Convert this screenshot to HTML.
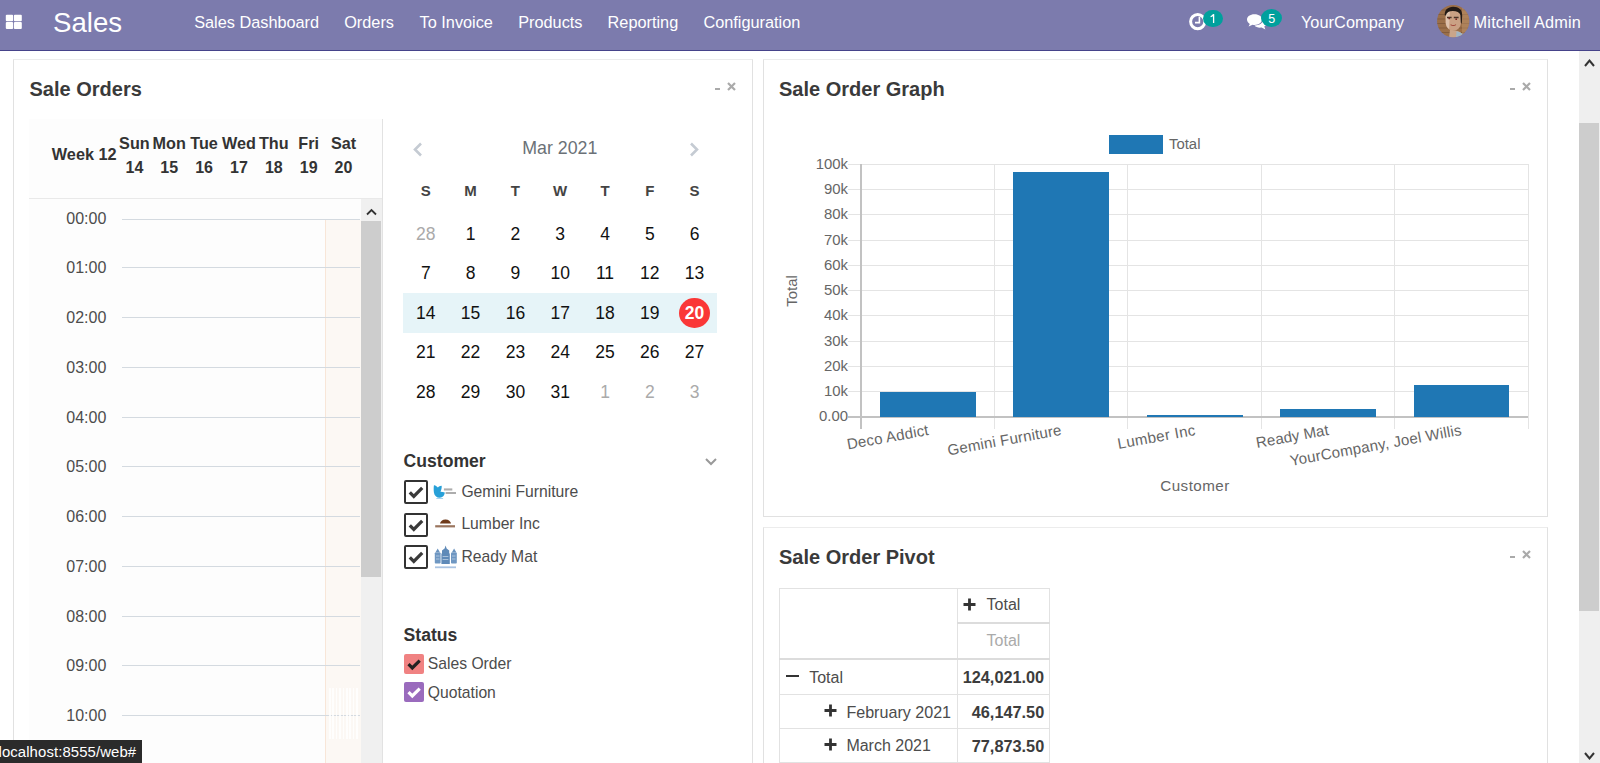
<!DOCTYPE html><html><head><meta charset="utf-8"><style>
*{box-sizing:border-box;margin:0;padding:0}
html,body{width:1600px;height:763px;overflow:hidden;background:#fff;font-family:"Liberation Sans",sans-serif;color:#333}
.a{position:absolute;white-space:nowrap;line-height:1}
.r{position:absolute}
svg.r{overflow:visible}
</style></head><body>
<div class="r" style="left:0;top:0;width:1600px;height:50px;background:#7C7BAD"></div>
<div class="r" style="left:0;top:50px;width:1600px;height:1px;background:#46438a"></div>
<svg class="r" style="left:5px;top:14px" width="18" height="16" viewBox="0 0 18 16">
<rect x="0.8" y="0.8" width="7.3" height="6.5" rx="1" fill="#fff"/>
<rect x="8.9" y="0.8" width="7.9" height="6.5" rx="1" fill="#fff"/>
<rect x="0.8" y="8.1" width="7.3" height="6.8" rx="1" fill="#fff"/>
<rect x="8.9" y="8.1" width="7.9" height="6.8" rx="1" fill="#fff"/></svg>
<div class="a" style="top:8.64px;font-size:27.6px;color:#fff;left:53.00px;">Sales</div>
<div class="a" style="top:14.40px;font-size:16.3px;color:#fff;left:194.20px;letter-spacing:0px;">Sales Dashboard</div>
<div class="a" style="top:14.40px;font-size:16.3px;color:#fff;left:344.20px;letter-spacing:0px;">Orders</div>
<div class="a" style="top:14.40px;font-size:16.3px;color:#fff;left:419.60px;letter-spacing:0px;">To Invoice</div>
<div class="a" style="top:14.40px;font-size:16.3px;color:#fff;left:518.20px;letter-spacing:0px;">Products</div>
<div class="a" style="top:14.40px;font-size:16.3px;color:#fff;left:607.60px;letter-spacing:0px;">Reporting</div>
<div class="a" style="top:14.40px;font-size:16.3px;color:#fff;left:703.40px;letter-spacing:0px;">Configuration</div>
<div class="a" style="top:14.40px;font-size:16.3px;color:#fff;left:1300.90px;letter-spacing:0.07px;">YourCompany</div>
<div class="a" style="top:14.40px;font-size:16.3px;color:#fff;left:1473.60px;letter-spacing:0.18px;">Mitchell Admin</div>
<svg class="r" style="left:1188px;top:12px" width="20" height="20" viewBox="0 0 20 20">
<circle cx="9.7" cy="9.6" r="7.1" fill="none" stroke="#fff" stroke-width="3"/>
<path d="M11.4 4.8 V10.6 H7" fill="none" stroke="#fff" stroke-width="1.6"/></svg>
<div class="r" style="left:1202.9px;top:9.7px;width:19.7px;height:17.7px;border-radius:50%;background:#00A09D"></div>
<svg class="r" style="left:1209px;top:13px" width="8" height="11" viewBox="0 0 8 11">
<path d="M4.6 1.2 V10" stroke="#fff" stroke-width="1.3"/><path d="M4.6 1.4 C3.8 2.6 2.8 3.4 1.6 3.8" fill="none" stroke="#fff" stroke-width="1.2"/></svg>
<svg class="r" style="left:1246px;top:13px" width="22" height="18" viewBox="0 0 22 18">
<path d="M8.5 1.2 C4 1.2 1 3.6 1 6.6 C1 8.4 2.1 9.9 3.8 10.9 L2.6 13.6 L6.6 11.8 C7.2 11.9 7.8 12 8.5 12 C13 12 16 9.6 16 6.6 C16 3.6 13 1.2 8.5 1.2 Z" fill="#fff"/>
<path d="M17.2 5.5 C19.3 6.4 20.6 8 20.6 9.8 C20.6 11.3 19.7 12.6 18.3 13.5 L19.4 16.6 L15.6 14.6 C15.1 14.7 14.6 14.7 14 14.7 C11.6 14.7 9.6 13.9 8.5 12.6 C13.7 12.6 17.2 9.8 17.2 6.6 Z" fill="#fff"/></svg>
<div class="r" style="left:1261.3px;top:8.9px;width:20.9px;height:18.1px;border-radius:50%;background:#00A09D"></div>
<div class="a" style="top:12.62px;font-size:12.5px;color:#fff;left:1261.80px;width:20px;text-align:center;">5</div>
<svg class="r" style="left:1436.9px;top:4.8px" width="32.4" height="32.4" viewBox="0 0 32.4 32.4">
<defs><clipPath id="av"><circle cx="16.2" cy="16.2" r="16.1"/></clipPath></defs>
<g clip-path="url(#av)">
<rect width="33" height="33" fill="#9c7049"/>
<path d="M0 5 H33 M0 9.5 H33 M0 14 H33 M0 18.5 H33 M0 23 H33 M0 27.5 H33" stroke="#6e4c32" stroke-width="1" opacity="0.55"/>
<rect x="25" y="3" width="8" height="26" fill="#c59a6e" opacity="0.45"/>
<path d="M13 25 C16 25 20 25.5 23 27 C25 28.5 26 31 26 33 H12 Z" fill="#c9a58a"/>
<path d="M19.5 26.2 C22 26.6 25 27.8 26.5 30 L27 33 H19 Z" fill="#9fb6c6"/>
<path d="M8.2 9 C8 5.5 11.5 4.2 16 4.6 C20.5 5 24 6.5 24.2 11 L24 18 C23.6 22.5 20.8 25.5 16.6 25.6 C12.2 25.6 9 22.5 8.6 18 Z" fill="#caa184"/>
<path d="M9 9 C9 6 11.5 5.5 13 6 L12 24 C10 22.5 9 20.5 8.8 18 Z" fill="#e2cbb8" opacity="0.8"/>
<path d="M7.8 10.5 C7.2 5 11 2 16 1.8 C21.5 1.7 25.5 4.5 25.2 10.5 L24.8 17.5 C24.5 18.5 24 18.5 23.8 17.5 L23.4 10 C22.6 7.4 19.6 6 16 6 C12 6 9.6 7.2 8.8 10.5 Z" fill="#221a16"/>
<path d="M10 12.5 H14.6 M16.8 12.5 H21.6" stroke="#4a3428" stroke-width="1.5"/>
<circle cx="12.2" cy="13.4" r="0.9" fill="#7a2a22"/><circle cx="19.2" cy="14.2" r="0.9" fill="#7a2a22"/>
<path d="M13.6 19.6 C15 20.6 17.6 20.6 19 19.6" fill="none" stroke="#a0463a" stroke-width="1.1"/>
</g></svg>
<div class="r" style="left:13px;top:59px;width:740px;height:760px;border:1px solid #e1e1e1;border-top-color:#ececec;background:#fff"></div>
<div class="r" style="left:763px;top:59px;width:785px;height:458px;border:1px solid #e1e1e1;border-top-color:#ececec;background:#fff"></div>
<div class="r" style="left:763px;top:527px;width:785px;height:300px;border:1px solid #e1e1e1;border-top-color:#ececec;background:#fff"></div>
<div class="a" style="top:78.87px;font-size:20px;color:#3a3a3a;font-weight:bold;left:29.50px;">Sale Orders</div>
<div class="a" style="top:78.57px;font-size:20px;color:#3a3a3a;font-weight:bold;left:779.00px;">Sale Order Graph</div>
<div class="a" style="top:547.37px;font-size:20px;color:#3a3a3a;font-weight:bold;left:779.00px;">Sale Order Pivot</div>
<div class="r" style="left:714.6px;top:87.7px;width:5.5px;height:2.2px;background:#aaa"></div>
<svg class="r" style="left:726.6px;top:81.8px" width="9" height="9" viewBox="0 0 9 9">
<path d="M1 1 L8 8 M8 1 L1 8" stroke="#aaa" stroke-width="2.2" stroke-linecap="butt"/></svg>
<div class="r" style="left:1509.6px;top:87.7px;width:5.5px;height:2.2px;background:#aaa"></div>
<svg class="r" style="left:1521.6px;top:81.8px" width="9" height="9" viewBox="0 0 9 9">
<path d="M1 1 L8 8 M8 1 L1 8" stroke="#aaa" stroke-width="2.2" stroke-linecap="butt"/></svg>
<div class="r" style="left:1509.6px;top:556.2px;width:5.5px;height:2.2px;background:#aaa"></div>
<svg class="r" style="left:1521.6px;top:550.3px" width="9" height="9" viewBox="0 0 9 9">
<path d="M1 1 L8 8 M8 1 L1 8" stroke="#aaa" stroke-width="2.2" stroke-linecap="butt"/></svg>
<div class="r" style="left:29px;top:119px;width:353px;height:644px;background:#fdfdfd"></div>
<div class="r" style="left:382px;top:119px;width:1px;height:644px;background:#e2e2e2"></div>
<div class="r" style="left:29px;top:198px;width:353px;height:1px;background:#e9e9e9"></div>
<div class="r" style="left:325px;top:220px;width:36px;height:543px;background:#fcf8f4;border-left:1px solid #f8e6d8"></div>
<div class="a" style="top:145.80px;font-size:16.3px;color:#333;font-weight:bold;left:51.80px;">Week 12</div>
<div class="a" style="top:135.09px;font-size:16.2px;color:#333;font-weight:bold;left:114.40px;width:40px;text-align:center;">Sun</div>
<div class="a" style="top:159.86px;font-size:16px;color:#333;font-weight:bold;left:114.40px;width:40px;text-align:center;">14</div>
<div class="a" style="top:135.09px;font-size:16.2px;color:#333;font-weight:bold;left:149.25px;width:40px;text-align:center;">Mon</div>
<div class="a" style="top:159.86px;font-size:16px;color:#333;font-weight:bold;left:149.25px;width:40px;text-align:center;">15</div>
<div class="a" style="top:135.09px;font-size:16.2px;color:#333;font-weight:bold;left:184.10px;width:40px;text-align:center;">Tue</div>
<div class="a" style="top:159.86px;font-size:16px;color:#333;font-weight:bold;left:184.10px;width:40px;text-align:center;">16</div>
<div class="a" style="top:135.09px;font-size:16.2px;color:#333;font-weight:bold;left:218.95px;width:40px;text-align:center;">Wed</div>
<div class="a" style="top:159.86px;font-size:16px;color:#333;font-weight:bold;left:218.95px;width:40px;text-align:center;">17</div>
<div class="a" style="top:135.09px;font-size:16.2px;color:#333;font-weight:bold;left:253.80px;width:40px;text-align:center;">Thu</div>
<div class="a" style="top:159.86px;font-size:16px;color:#333;font-weight:bold;left:253.80px;width:40px;text-align:center;">18</div>
<div class="a" style="top:135.09px;font-size:16.2px;color:#333;font-weight:bold;left:288.65px;width:40px;text-align:center;">Fri</div>
<div class="a" style="top:159.86px;font-size:16px;color:#333;font-weight:bold;left:288.65px;width:40px;text-align:center;">19</div>
<div class="a" style="top:135.09px;font-size:16.2px;color:#333;font-weight:bold;left:323.50px;width:40px;text-align:center;">Sat</div>
<div class="a" style="top:159.86px;font-size:16px;color:#333;font-weight:bold;left:323.50px;width:40px;text-align:center;">20</div>
<div class="a" style="top:210.86px;font-size:16px;color:#4c4c4c;left:26.30px;width:80px;text-align:right;">00:00</div>
<div class="r" style="left:122px;top:219px;width:238px;height:1px;background:#d4dae0"></div>
<div class="a" style="top:259.76px;font-size:16px;color:#4c4c4c;left:26.30px;width:80px;text-align:right;">01:00</div>
<div class="r" style="left:122px;top:267px;width:238px;height:1px;background:#d4dae0"></div>
<div class="a" style="top:309.76px;font-size:16px;color:#4c4c4c;left:26.30px;width:80px;text-align:right;">02:00</div>
<div class="r" style="left:122px;top:317px;width:238px;height:1px;background:#d4dae0"></div>
<div class="a" style="top:359.76px;font-size:16px;color:#4c4c4c;left:26.30px;width:80px;text-align:right;">03:00</div>
<div class="r" style="left:122px;top:367px;width:238px;height:1px;background:#d4dae0"></div>
<div class="a" style="top:409.76px;font-size:16px;color:#4c4c4c;left:26.30px;width:80px;text-align:right;">04:00</div>
<div class="r" style="left:122px;top:417px;width:238px;height:1px;background:#d4dae0"></div>
<div class="a" style="top:458.76px;font-size:16px;color:#4c4c4c;left:26.30px;width:80px;text-align:right;">05:00</div>
<div class="r" style="left:122px;top:466px;width:238px;height:1px;background:#d4dae0"></div>
<div class="a" style="top:508.76px;font-size:16px;color:#4c4c4c;left:26.30px;width:80px;text-align:right;">06:00</div>
<div class="r" style="left:122px;top:516px;width:238px;height:1px;background:#d4dae0"></div>
<div class="a" style="top:558.76px;font-size:16px;color:#4c4c4c;left:26.30px;width:80px;text-align:right;">07:00</div>
<div class="r" style="left:122px;top:566px;width:238px;height:1px;background:#d4dae0"></div>
<div class="a" style="top:608.76px;font-size:16px;color:#4c4c4c;left:26.30px;width:80px;text-align:right;">08:00</div>
<div class="r" style="left:122px;top:616px;width:238px;height:1px;background:#d4dae0"></div>
<div class="a" style="top:657.76px;font-size:16px;color:#4c4c4c;left:26.30px;width:80px;text-align:right;">09:00</div>
<div class="r" style="left:122px;top:665px;width:238px;height:1px;background:#d4dae0"></div>
<div class="a" style="top:707.76px;font-size:16px;color:#4c4c4c;left:26.30px;width:80px;text-align:right;">10:00</div>
<div class="r" style="left:122px;top:715px;width:238px;height:1px;background:#d4dae0"></div>
<div class="r" style="left:328.5px;top:688px;width:31px;height:51px;background:repeating-linear-gradient(90deg,rgba(255,255,255,0.85) 0 1.6px,rgba(255,255,255,0) 1.6px 3.4px)"></div>
<div class="r" style="left:361px;top:199px;width:21px;height:564px;background:#f0f0f0"></div>
<div class="r" style="left:361px;top:221px;width:20px;height:356px;background:#cdcdcd"></div>
<svg class="r" style="left:366px;top:207.5px" width="11" height="8" viewBox="0 0 11 8">
<path d="M1 6.5 L5.5 2 L10 6.5" fill="none" stroke="#333" stroke-width="1.8"/></svg>
<svg class="r" style="left:412px;top:142px" width="12" height="15" viewBox="0 0 12 15">
<path d="M9 1.5 L3 7.5 L9 13.5" fill="none" stroke="#c5cbd3" stroke-width="2.6"/></svg>
<svg class="r" style="left:688px;top:142px" width="12" height="15" viewBox="0 0 12 15">
<path d="M3 1.5 L9 7.5 L3 13.5" fill="none" stroke="#c5cbd3" stroke-width="2.6"/></svg>
<div class="a" style="top:140.23px;font-size:17.8px;color:#6b7177;left:499.80px;width:120px;text-align:center;">Mar 2021</div>
<div class="r" style="left:403px;top:293px;width:314px;height:40px;background:#e6f4f8"></div>
<div class="a" style="top:182.90px;font-size:15px;color:#444;font-weight:bold;left:405.80px;width:40px;text-align:center;">S</div>
<div class="a" style="top:182.90px;font-size:15px;color:#444;font-weight:bold;left:450.60px;width:40px;text-align:center;">M</div>
<div class="a" style="top:182.90px;font-size:15px;color:#444;font-weight:bold;left:495.40px;width:40px;text-align:center;">T</div>
<div class="a" style="top:182.90px;font-size:15px;color:#444;font-weight:bold;left:540.20px;width:40px;text-align:center;">W</div>
<div class="a" style="top:182.90px;font-size:15px;color:#444;font-weight:bold;left:585.00px;width:40px;text-align:center;">T</div>
<div class="a" style="top:182.90px;font-size:15px;color:#444;font-weight:bold;left:629.80px;width:40px;text-align:center;">F</div>
<div class="a" style="top:182.90px;font-size:15px;color:#444;font-weight:bold;left:674.60px;width:40px;text-align:center;">S</div>
<div class="a" style="top:225.79px;font-size:17.5px;color:#aaa;left:405.80px;width:40px;text-align:center;">28</div>
<div class="a" style="top:225.79px;font-size:17.5px;color:#111;left:450.60px;width:40px;text-align:center;">1</div>
<div class="a" style="top:225.79px;font-size:17.5px;color:#111;left:495.40px;width:40px;text-align:center;">2</div>
<div class="a" style="top:225.79px;font-size:17.5px;color:#111;left:540.20px;width:40px;text-align:center;">3</div>
<div class="a" style="top:225.79px;font-size:17.5px;color:#111;left:585.00px;width:40px;text-align:center;">4</div>
<div class="a" style="top:225.79px;font-size:17.5px;color:#111;left:629.80px;width:40px;text-align:center;">5</div>
<div class="a" style="top:225.79px;font-size:17.5px;color:#111;left:674.60px;width:40px;text-align:center;">6</div>
<div class="a" style="top:264.99px;font-size:17.5px;color:#111;left:405.80px;width:40px;text-align:center;">7</div>
<div class="a" style="top:264.99px;font-size:17.5px;color:#111;left:450.60px;width:40px;text-align:center;">8</div>
<div class="a" style="top:264.99px;font-size:17.5px;color:#111;left:495.40px;width:40px;text-align:center;">9</div>
<div class="a" style="top:264.99px;font-size:17.5px;color:#111;left:540.20px;width:40px;text-align:center;">10</div>
<div class="a" style="top:264.99px;font-size:17.5px;color:#111;left:585.00px;width:40px;text-align:center;">11</div>
<div class="a" style="top:264.99px;font-size:17.5px;color:#111;left:629.80px;width:40px;text-align:center;">12</div>
<div class="a" style="top:264.99px;font-size:17.5px;color:#111;left:674.60px;width:40px;text-align:center;">13</div>
<div class="a" style="top:304.79px;font-size:17.5px;color:#111;left:405.80px;width:40px;text-align:center;">14</div>
<div class="a" style="top:304.79px;font-size:17.5px;color:#111;left:450.60px;width:40px;text-align:center;">15</div>
<div class="a" style="top:304.79px;font-size:17.5px;color:#111;left:495.40px;width:40px;text-align:center;">16</div>
<div class="a" style="top:304.79px;font-size:17.5px;color:#111;left:540.20px;width:40px;text-align:center;">17</div>
<div class="a" style="top:304.79px;font-size:17.5px;color:#111;left:585.00px;width:40px;text-align:center;">18</div>
<div class="a" style="top:304.79px;font-size:17.5px;color:#111;left:629.80px;width:40px;text-align:center;">19</div>
<div class="r" style="left:679.0px;top:297.6px;width:31.2px;height:30.6px;border-radius:50%;background:#fa3737"></div>
<div class="a" style="top:304.79px;font-size:17.5px;color:#fff;font-weight:bold;left:674.60px;width:40px;text-align:center;">20</div>
<div class="a" style="top:344.09px;font-size:17.5px;color:#111;left:405.80px;width:40px;text-align:center;">21</div>
<div class="a" style="top:344.09px;font-size:17.5px;color:#111;left:450.60px;width:40px;text-align:center;">22</div>
<div class="a" style="top:344.09px;font-size:17.5px;color:#111;left:495.40px;width:40px;text-align:center;">23</div>
<div class="a" style="top:344.09px;font-size:17.5px;color:#111;left:540.20px;width:40px;text-align:center;">24</div>
<div class="a" style="top:344.09px;font-size:17.5px;color:#111;left:585.00px;width:40px;text-align:center;">25</div>
<div class="a" style="top:344.09px;font-size:17.5px;color:#111;left:629.80px;width:40px;text-align:center;">26</div>
<div class="a" style="top:344.09px;font-size:17.5px;color:#111;left:674.60px;width:40px;text-align:center;">27</div>
<div class="a" style="top:383.79px;font-size:17.5px;color:#111;left:405.80px;width:40px;text-align:center;">28</div>
<div class="a" style="top:383.79px;font-size:17.5px;color:#111;left:450.60px;width:40px;text-align:center;">29</div>
<div class="a" style="top:383.79px;font-size:17.5px;color:#111;left:495.40px;width:40px;text-align:center;">30</div>
<div class="a" style="top:383.79px;font-size:17.5px;color:#111;left:540.20px;width:40px;text-align:center;">31</div>
<div class="a" style="top:383.79px;font-size:17.5px;color:#aaa;left:585.00px;width:40px;text-align:center;">1</div>
<div class="a" style="top:383.79px;font-size:17.5px;color:#aaa;left:629.80px;width:40px;text-align:center;">2</div>
<div class="a" style="top:383.79px;font-size:17.5px;color:#aaa;left:674.60px;width:40px;text-align:center;">3</div>
<div class="a" style="top:452.60px;font-size:17.6px;color:#333;font-weight:bold;left:403.60px;">Customer</div>
<svg class="r" style="left:704px;top:456px" width="14" height="11" viewBox="0 0 14 11">
<path d="M2 3 L7 8 L12 3" fill="none" stroke="#999" stroke-width="2"/></svg>
<div class="r" style="left:404px;top:480.0px;width:24px;height:24px;border:2.2px solid #333;border-radius:2px"></div>
<svg class="r" style="left:404px;top:480.0px" width="24" height="24" viewBox="0 0 24 24">
<path d="M5.8 12.3 L9.8 16.3 L18.2 7.9" fill="none" stroke="#3a3a3a" stroke-width="3.3"/></svg>
<div class="a" style="top:484.11px;font-size:15.7px;color:#4c4c4c;left:461.40px;">Gemini Furniture</div>
<div class="r" style="left:404px;top:512.7px;width:24px;height:24px;border:2.2px solid #333;border-radius:2px"></div>
<svg class="r" style="left:404px;top:512.7px" width="24" height="24" viewBox="0 0 24 24">
<path d="M5.8 12.3 L9.8 16.3 L18.2 7.9" fill="none" stroke="#3a3a3a" stroke-width="3.3"/></svg>
<div class="a" style="top:516.31px;font-size:15.7px;color:#4c4c4c;left:461.40px;">Lumber Inc</div>
<div class="r" style="left:404px;top:545.4px;width:24px;height:24px;border:2.2px solid #333;border-radius:2px"></div>
<svg class="r" style="left:404px;top:545.4px" width="24" height="24" viewBox="0 0 24 24">
<path d="M5.8 12.3 L9.8 16.3 L18.2 7.9" fill="none" stroke="#3a3a3a" stroke-width="3.3"/></svg>
<div class="a" style="top:549.31px;font-size:15.7px;color:#4c4c4c;left:461.40px;">Ready Mat</div>
<svg class="r" style="left:428px;top:480px" width="34" height="92" viewBox="0 0 34 92">
<path d="M5.9 5.4 C7.2 5 8.6 6.6 9.9 7.5 C11 6.6 12.4 5.6 13.7 5.9 C13.9 8 13.2 10 12.5 11.7 C14 11.8 15.6 12 16.8 12.5 C16.6 15.6 14.4 17.8 11.7 17.7 C8.6 17.6 6.4 15.6 5.9 12.4 C5.6 10 5.6 7.4 5.9 5.4 Z" fill="#27a0d8"/>
<rect x="8.3" y="18" width="6.8" height="0.9" fill="#9ccfee"/>
<rect x="15.9" y="8.4" width="8.4" height="2.1" fill="#8a8a8a" opacity="0.7"/>
<rect x="17.6" y="12" width="10.4" height="2" fill="#8a8a8a" opacity="0.7"/>
<path d="M12 43.6 C13 40.2 15.8 39.6 17.5 39.6 C19.2 39.6 22 40.2 23 43.6 Z" fill="#6f3a1a"/>
<rect x="7.2" y="45.2" width="19.8" height="2.2" fill="#6f3a1a" opacity="0.7"/>
<path d="M7.4 72.5 L9.7 68.5 L12 72.5 Z M23.8 72.5 L26.1 68.5 L28.4 72.5 Z" fill="#6a93bf"/>
<path d="M14 74 L14 70.5 L16.6 68.5 L17.6 65.6 L18.6 68.5 L21.2 70.5 L21.2 74 Z" fill="#5f8ab8"/>
<rect x="6.8" y="72.5" width="5.8" height="11" rx="0.8" fill="#6f97c2"/>
<rect x="23" y="72.5" width="5.8" height="11" rx="0.8" fill="#6f97c2"/>
<rect x="13.4" y="73.5" width="8.4" height="10.5" fill="#5f8ab8"/>
<path d="M8 76 H11.5 M8 79 H11.5 M24 76 H27.5 M24 79 H27.5 M14.6 76.5 H20.4 M14.6 79.5 H20.4" stroke="#c9d9ea" stroke-width="0.7"/>
<rect x="7" y="86.4" width="21" height="1.8" fill="#a9c3e2"/>
</svg>
<div class="a" style="top:626.70px;font-size:17.6px;color:#333;font-weight:bold;left:403.60px;">Status</div>
<div class="r" style="left:404px;top:653.5px;width:20px;height:20px;background:#f08282;border-radius:2px"></div>
<svg class="r" style="left:404px;top:653.5px" width="20" height="20" viewBox="0 0 20 20">
<path d="M4.5 10.2 L8.3 14 L15.7 6.6" fill="none" stroke="#222" stroke-width="3.2"/></svg>
<div class="a" style="top:656.31px;font-size:15.7px;color:#4c4c4c;left:427.80px;">Sales Order</div>
<div class="r" style="left:404px;top:682px;width:20px;height:20px;background:#9a6bbd;border-radius:2px"></div>
<svg class="r" style="left:404px;top:682px" width="20" height="20" viewBox="0 0 20 20">
<path d="M4.5 10.2 L8.3 14 L15.7 6.6" fill="none" stroke="#fff" stroke-width="3.2"/></svg>
<div class="a" style="top:684.71px;font-size:15.7px;color:#4c4c4c;left:427.80px;">Quotation</div>
<div class="r" style="left:848px;top:416.40px;width:680px;height:1px;background:#e4e4e4"></div>
<div class="a" style="top:409.49px;font-size:14.9px;color:#666;left:788.00px;width:60px;text-align:right;">0.00</div>
<div class="r" style="left:848px;top:391.15px;width:680px;height:1px;background:#e4e4e4"></div>
<div class="a" style="top:384.24px;font-size:14.9px;color:#666;left:788.00px;width:60px;text-align:right;">10k</div>
<div class="r" style="left:848px;top:365.90px;width:680px;height:1px;background:#e4e4e4"></div>
<div class="a" style="top:358.99px;font-size:14.9px;color:#666;left:788.00px;width:60px;text-align:right;">20k</div>
<div class="r" style="left:848px;top:340.65px;width:680px;height:1px;background:#e4e4e4"></div>
<div class="a" style="top:333.74px;font-size:14.9px;color:#666;left:788.00px;width:60px;text-align:right;">30k</div>
<div class="r" style="left:848px;top:315.40px;width:680px;height:1px;background:#e4e4e4"></div>
<div class="a" style="top:308.49px;font-size:14.9px;color:#666;left:788.00px;width:60px;text-align:right;">40k</div>
<div class="r" style="left:848px;top:290.15px;width:680px;height:1px;background:#e4e4e4"></div>
<div class="a" style="top:283.24px;font-size:14.9px;color:#666;left:788.00px;width:60px;text-align:right;">50k</div>
<div class="r" style="left:848px;top:264.90px;width:680px;height:1px;background:#e4e4e4"></div>
<div class="a" style="top:257.99px;font-size:14.9px;color:#666;left:788.00px;width:60px;text-align:right;">60k</div>
<div class="r" style="left:848px;top:239.65px;width:680px;height:1px;background:#e4e4e4"></div>
<div class="a" style="top:232.74px;font-size:14.9px;color:#666;left:788.00px;width:60px;text-align:right;">70k</div>
<div class="r" style="left:848px;top:214.40px;width:680px;height:1px;background:#e4e4e4"></div>
<div class="a" style="top:207.49px;font-size:14.9px;color:#666;left:788.00px;width:60px;text-align:right;">80k</div>
<div class="r" style="left:848px;top:189.15px;width:680px;height:1px;background:#e4e4e4"></div>
<div class="a" style="top:182.24px;font-size:14.9px;color:#666;left:788.00px;width:60px;text-align:right;">90k</div>
<div class="r" style="left:848px;top:163.90px;width:680px;height:1px;background:#e4e4e4"></div>
<div class="a" style="top:156.99px;font-size:14.9px;color:#666;left:788.00px;width:60px;text-align:right;">100k</div>
<div class="r" style="left:993.9px;top:163.9px;width:1px;height:265.0px;background:#e4e4e4"></div>
<div class="r" style="left:1127.3px;top:163.9px;width:1px;height:265.0px;background:#e4e4e4"></div>
<div class="r" style="left:1260.7px;top:163.9px;width:1px;height:265.0px;background:#e4e4e4"></div>
<div class="r" style="left:1394.1px;top:163.9px;width:1px;height:265.0px;background:#e4e4e4"></div>
<div class="r" style="left:1527.5px;top:163.9px;width:1px;height:265.0px;background:#e4e4e4"></div>
<div class="r" style="left:860.3px;top:164.4px;width:1.4px;height:264.5px;background:#c2c2c2"></div>
<div class="r" style="left:848px;top:416.2px;width:680px;height:1.4px;background:#c2c2c2"></div>
<div class="r" style="left:880px;top:392.0px;width:95.5px;height:24.9px;background:#1f77b4"></div>
<div class="r" style="left:1013px;top:172.4px;width:96.0px;height:244.5px;background:#1f77b4"></div>
<div class="r" style="left:1147px;top:415.2px;width:95.5px;height:1.7px;background:#1f77b4"></div>
<div class="r" style="left:1280px;top:408.9px;width:96.0px;height:8.0px;background:#1f77b4"></div>
<div class="r" style="left:1414px;top:385.4px;width:95.4px;height:31.5px;background:#1f77b4"></div>
<div class="r" style="left:1109px;top:135.3px;width:53.5px;height:18.7px;background:#1f77b4"></div>
<div class="a" style="top:137.39px;font-size:14.9px;color:#666;left:1169.00px;">Total</div>
<div class="a" style="left:753.3px;top:282.7px;width:80px;height:16px;font-size:14.9px;color:#666;text-align:center;transform:rotate(-90deg)">Total</div>
<div class="a" style="top:477.53px;font-size:15.2px;color:#666;left:1145.00px;width:100px;text-align:center;letter-spacing:0.45px;">Customer</div>
<div class="a" style="left:626.7px;top:421.8px;width:300px;text-align:right;font-size:15.1px;letter-spacing:0.2px;color:#666;transform-origin:100% 0;transform:rotate(-10.3deg)">Deco Addict</div>
<div class="a" style="left:760.0px;top:421.8px;width:300px;text-align:right;font-size:15.1px;letter-spacing:0.2px;color:#666;transform-origin:100% 0;transform:rotate(-10.3deg)">Gemini Furniture</div>
<div class="a" style="left:893.5px;top:421.8px;width:300px;text-align:right;font-size:15.1px;letter-spacing:0.35px;color:#666;transform-origin:100% 0;transform:rotate(-10.3deg)">Lumber Inc</div>
<div class="a" style="left:1027.0px;top:421.8px;width:300px;text-align:right;font-size:15.1px;letter-spacing:0.05px;color:#666;transform-origin:100% 0;transform:rotate(-10.3deg)">Ready Mat</div>
<div class="a" style="left:1160.2px;top:421.8px;width:300px;text-align:right;font-size:15.1px;letter-spacing:0.2px;color:#666;transform-origin:100% 0;transform:rotate(-10.3deg)">YourCompany, Joel Willis</div>
<div class="r" style="left:779px;top:587.5px;width:271px;height:1px;background:#e2e2e2"></div>
<div class="r" style="left:779px;top:587.5px;width:1px;height:180px;background:#e2e2e2"></div>
<div class="r" style="left:1049px;top:587.5px;width:1px;height:180px;background:#e2e2e2"></div>
<div class="r" style="left:957px;top:587.5px;width:1px;height:180px;background:#e2e2e2"></div>
<div class="r" style="left:957px;top:621.5px;width:93px;height:2.5px;background:#dcdcdc"></div>
<div class="r" style="left:779px;top:657.5px;width:271px;height:2.5px;background:#dcdcdc"></div>
<div class="r" style="left:779px;top:693.5px;width:271px;height:1px;background:#e2e2e2"></div>
<div class="r" style="left:779px;top:727.5px;width:271px;height:1px;background:#e2e2e2"></div>
<div class="r" style="left:779px;top:761.5px;width:271px;height:1px;background:#e2e2e2"></div>
<svg class="r" style="left:963px;top:598px" width="13" height="13" viewBox="0 0 13 13">
<path d="M6.5 0.5 V12.5 M0.5 6.5 H12.5" stroke="#333" stroke-width="2.8"/></svg>
<div class="a" style="top:597.16px;font-size:16px;color:#4c4c4c;left:986.60px;">Total</div>
<div class="a" style="top:633.16px;font-size:16px;color:#aaa;left:986.60px;">Total</div>
<div class="r" style="left:785.6px;top:674.5px;width:13.7px;height:2.8px;background:#333"></div>
<div class="a" style="top:669.66px;font-size:16px;color:#4c4c4c;left:809.20px;">Total</div>
<div class="a" style="top:669.40px;font-size:16.3px;color:#3c3c3c;font-weight:bold;left:924.20px;width:120px;text-align:right;">124,021.00</div>
<svg class="r" style="left:824px;top:704px" width="13" height="13" viewBox="0 0 13 13">
<path d="M6.5 0.5 V12.5 M0.5 6.5 H12.5" stroke="#333" stroke-width="2.8"/></svg>
<div class="a" style="top:703.77px;font-size:16.1px;color:#4c4c4c;left:846.40px;">February 2021</div>
<div class="a" style="top:703.60px;font-size:16.3px;color:#3c3c3c;font-weight:bold;left:924.20px;width:120px;text-align:right;">46,147.50</div>
<svg class="r" style="left:824px;top:738px" width="13" height="13" viewBox="0 0 13 13">
<path d="M6.5 0.5 V12.5 M0.5 6.5 H12.5" stroke="#333" stroke-width="2.8"/></svg>
<div class="a" style="top:737.76px;font-size:16px;color:#4c4c4c;left:846.40px;">March 2021</div>
<div class="a" style="top:737.50px;font-size:16.3px;color:#3c3c3c;font-weight:bold;left:924.20px;width:120px;text-align:right;">77,873.50</div>
<div class="r" style="left:1579px;top:51px;width:21px;height:712px;background:#efefef"></div>
<div class="r" style="left:1579px;top:123px;width:20px;height:488px;background:#cdcdcd"></div>
<svg class="r" style="left:1584px;top:58px" width="11" height="10" viewBox="0 0 11 10">
<path d="M1 8 L5.5 2.5 L10 8" fill="none" stroke="#333" stroke-width="2"/></svg>
<svg class="r" style="left:1584px;top:751px" width="11" height="10" viewBox="0 0 11 10">
<path d="M1 2 L5.5 7.5 L10 2" fill="none" stroke="#333" stroke-width="2"/></svg>
<div class="r" style="left:0px;top:740px;width:142px;height:23px;background:#2b2b2b"></div>
<div class="a" style="top:745.49px;font-size:14.9px;color:#fff;left:-1.50px;letter-spacing:0.1px;">localhost:8555/web#</div>
</body></html>
